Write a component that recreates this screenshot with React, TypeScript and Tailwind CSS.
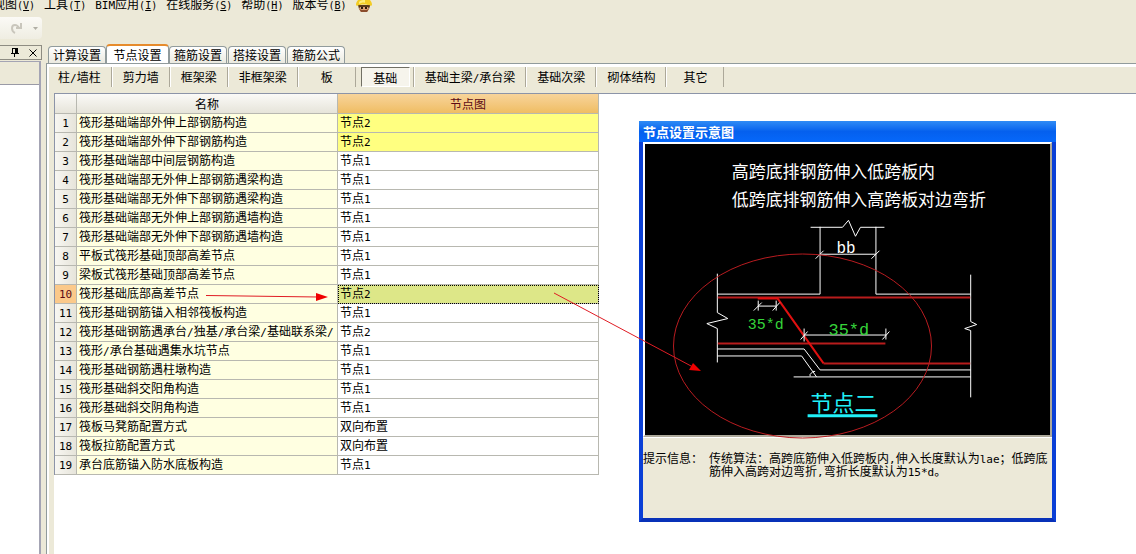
import { Fragment } from "react";

const FONT = "font-['Noto_Sans_CJK_SC','Liberation_Sans',sans-serif]";

const MENUS: [string, string][] = [
  ["视图", "V"],
  ["工具", "T"],
  ["BIM应用", "I"],
  ["在线服务", "S"],
  ["帮助", "H"],
  ["版本号", "B"],
];

const TABS = ["计算设置", "节点设置", "箍筋设置", "搭接设置", "箍筋公式"];
const ACTIVE_TAB = "节点设置";

const CATEGORIES = ["柱/墙柱", "剪力墙", "框架梁", "非框架梁", "板", "基础", "基础主梁/承台梁", "基础次梁", "砌体结构", "其它"];
const ACTIVE_CATEGORY = "基础";

interface Row {
  name: string;
  node: string;
  changed?: boolean;
}

const ROWS: Row[] = [
  { name: "筏形基础端部外伸上部钢筋构造", node: "节点2", changed: true },
  { name: "筏形基础端部外伸下部钢筋构造", node: "节点2", changed: true },
  { name: "筏形基础端部中间层钢筋构造", node: "节点1" },
  { name: "筏形基础端部无外伸上部钢筋遇梁构造", node: "节点1" },
  { name: "筏形基础端部无外伸下部钢筋遇梁构造", node: "节点1" },
  { name: "筏形基础端部无外伸上部钢筋遇墙构造", node: "节点1" },
  { name: "筏形基础端部无外伸下部钢筋遇墙构造", node: "节点1" },
  { name: "平板式筏形基础顶部高差节点", node: "节点1" },
  { name: "梁板式筏形基础顶部高差节点", node: "节点1" },
  { name: "筏形基础底部高差节点", node: "节点2" },
  { name: "筏形基础钢筋锚入相邻筏板构造", node: "节点1" },
  { name: "筏形基础钢筋遇承台/独基/承台梁/基础联系梁/", node: "节点2" },
  { name: "筏形/承台基础遇集水坑节点", node: "节点1" },
  { name: "筏形基础钢筋遇柱墩构造", node: "节点1" },
  { name: "筏形基础斜交阳角构造", node: "节点1" },
  { name: "筏形基础斜交阴角构造", node: "节点1" },
  { name: "筏板马凳筋配置方式", node: "双向布置" },
  { name: "筏板拉筋配置方式", node: "双向布置" },
  { name: "承台底筋锚入防水底板构造", node: "节点1" },
];
const SELECTED = 9;

// Latin runs are set about half as wide as a Chinese character
function Mixed({ text }: { text: string }) {
  return (
    <>
      {text.split(/([\x21-\x7e]+)/).map((part, i) =>
        i % 2 ? (
          <span key={i} className="font-['DejaVu_Sans_Mono',monospace] text-[11px] leading-none">{part}</span>
        ) : (
          <Fragment key={i}>{part}</Fragment>
        )
      )}
    </>
  );
}

function MenuBar() {
  return (
    <nav className="flex h-[17px] shrink-0 items-start gap-[9px] overflow-hidden whitespace-nowrap">
      {MENUS.map(([label, key], i) => (
        <button key={key} type="button" className={`h-2 leading-2 ${i === 0 ? "-ml-[7px]" : ""}`}>
          <Mixed text={label} />
          <span className="font-['DejaVu_Sans_Mono',monospace] text-[10px] leading-none">
            (<u>{key}</u>)
          </span>
        </button>
      ))}
      <button type="button" aria-label="助手">
        <Helmet />
      </button>
    </nav>
  );
}

function Helmet() {
  return (
    <svg width="16" height="13" viewBox="0 0 16 13">
      <path d="M3 5h10v4l-2 3H5L3 9z" fill="#dca274" />
      <path d="M2 5h12v1l-1 3-1-2H4L3 9z" fill="#5a3818" />
      <path d="M3 9l3 1h4l3-1-2 3H5z" fill="#8a4c2c" />
      <path d="M5 7h2v2H5zM9 7h2v2H9z" fill="#2c1a0c" />
      <path d="M0 5C0 1 3-2 8-2s8 3 8 7l-1 1c-3-2-11-2-14 0z" fill="#f3cc24" />
      <path d="M3 2c2-2 4-2 6-2v3C7 2 5 3 3 4z" fill="#fdee7a" />
    </svg>
  );
}

function SidePanel() {
  return (
    <aside className="flex w-[42px] shrink-0 flex-col">
      <div className="flex h-[22px] items-center justify-end gap-[10px] rounded-r bg-linear-to-b from-[#fbfaf6] to-[#efede2] pr-1">
        <button type="button" aria-label="撤销列表" className="mr-auto">
          <svg width="2" height="3" viewBox="3 0 2 3"><path d="M0 0h5L2.500 3z" /></svg>
        </button>
        <button type="button" aria-label="重做">
          <svg width="13" height="12" viewBox="0 0 13 12" fill="none" stroke="#c9c6bc" strokeWidth="2">
            <path d="M5 11C1 9 1 3 5 3c2 0 3 1 4 3" />
            <path d="M11 1v5H6" />
          </svg>
        </button>
        <button type="button" aria-label="重做列表">
          <svg width="5" height="3" viewBox="0 0 5 3"><path d="M0 0h5L2.500 3z" fill="#b0aea4" /></svg>
        </button>
      </div>
      <div className="mt-[6px] flex h-[15px] items-center justify-end gap-[10px] border border-l-0 border-[#8e8c82] pr-1">
        <button type="button" aria-label="固定">
          <svg width="8" height="9" viewBox="0 0 8 9">
            <path d="M1 0h6v5h1v1H4v3H3V6H0V5h1zM2 1v4h2V1z" fillRule="evenodd" />
          </svg>
        </button>
        <button type="button" aria-label="关闭">
          <svg width="8" height="8" viewBox="0 0 8 8" stroke="#000"><path d="M.5.500l7 7M7.500.500l-7 7" /></svg>
        </button>
      </div>
      <div className="mt-px mr-px flex flex-1 flex-col border-t border-r-2 border-[#a4a4b4]">
        <div className="h-[23px] border-b border-[#9a9aa6]" />
        <div className="flex-1 bg-white" />
      </div>
    </aside>
  );
}

function TabStrip() {
  return (
    <div className="flex h-[19px] shrink-0 items-end gap-px pl-[2px]" role="tablist">
      {TABS.map(tab =>
        tab === ACTIVE_TAB ? (
          <button key={tab} type="button" role="tab" aria-selected className="-mx-px h-[19px] w-[63px] rounded-t-sm border-x border-t-2 border-x-[#919b9c] border-t-[#e68b2c] bg-white leading-4">
            {tab}
          </button>
        ) : (
          <button key={tab} type="button" role="tab" aria-selected={false} className="h-[17px] w-[58px] rounded-t-sm border border-b-0 border-[#919b9c] bg-linear-to-b from-white to-[#ebeae0] leading-4">
            {tab}
          </button>
        )
      )}
    </div>
  );
}

function CategoryBar() {
  return (
    <div className="flex h-[26px] shrink-0 items-start bg-[#ece9d8] whitespace-nowrap">
      {CATEGORIES.map(cat => (
        <div key={cat} className="flex h-5 min-w-[58px] border-r border-[#aca899] first:-ml-[2px]">
          {cat === ACTIVE_CATEGORY ? (
            <button type="button" aria-pressed className="mr-[3px] ml-[5px] flex-1 border border-t-[#716f64] border-r-white border-b-white border-l-[#716f64] bg-[#f6f4ec] leading-5">
              {cat}
            </button>
          ) : (
            <button type="button" className="flex-1 border-l border-white px-[10px] leading-[18px]">
              <Mixed text={cat} />
            </button>
          )}
        </div>
      ))}
    </div>
  );
}

function NodeTable() {
  return (
    <table className="w-[545px] table-fixed border-separate border-spacing-0 border-l border-[#8c94a8] text-left whitespace-nowrap">
      <colgroup>
        <col className="w-[22px]" />
        <col />
        <col className="w-[261px]" />
      </colgroup>
      <thead>
        <tr className="h-5 text-center leading-[19px]">
          <th className="border-r border-b border-[#b8b8b0] bg-linear-to-b from-[#fbfaf7] to-[#e6e4da] p-0" />
          <th className="border-r border-b border-[#b8b8b0] bg-linear-to-b from-[#fbfaf7] to-[#e6e4da] p-0 font-normal">名称</th>
          <th className="border-r border-b border-[#b8b8b0] bg-linear-to-b from-[#f8d49a] to-[#efbd62] p-0 font-normal text-[#5c0a14]">节点图</th>
        </tr>
      </thead>
      <tbody className="align-top">
        {ROWS.map((row, i) => {
          const selected = i === SELECTED;
          return (
            <tr key={row.name} className="h-[19px] leading-4">
              <th className={`border-r border-b border-[#b8b8b0] p-0 text-center font-normal ${selected ? "bg-[#fbc98a] text-[#5c0a14]" : "bg-linear-to-r from-[#f8f7f2] to-[#e6e4da]"}`}>
                <Mixed text={String(i + 1)} />
              </th>
              <td className="overflow-hidden border-r border-b border-[#b8b8b0] bg-[#ffffe1] p-0 pl-[2px]">
                <Mixed text={row.name} />
              </td>
              <td className={`border-r border-b border-[#b8b8b0] p-0 pl-[2px] ${selected ? "bg-[#dde788] outline-1 -outline-offset-1 outline-black outline-dotted" : row.changed ? "bg-[#ffff80]" : "bg-white"}`}>
                <Mixed text={row.node} />
              </td>
            </tr>
          );
        })}
      </tbody>
    </table>
  );
}

function NodeDrawing() {
  return (
    <svg viewBox="645 144 406 292" className="block w-full bg-black font-['Noto_Sans_CJK_SC',sans-serif]" fill="none" stroke="#fff">
      <g fill="#fff" stroke="none" fontSize="17">
        <text x="732" y="178">高跨底排钢筋伸入低跨板内</text>
        <text x="732" y="206">低跨底排钢筋伸入高跨板对边弯折</text>
      </g>

      {/* column */}
      <path d="M811 227.500h32l6-7 7 16 5-9h24M820.500 227v67.500M876.500 227v67.500M820.500 254.500h56M816 259l8-8M872 259l8-8" />
      {/* slab outline */}
      <path d="M717.500 294.500h103M876.500 294.500h95M717.500 274v39l10.500 6-21 5 10.500 5v34M971.500 275v47l6 3-12 4 6 2v67" />
      <path d="M717.500 349.500h87l16 21h151M717.500 356.500h84.500l15 21M794 377.500h177.500M810.500 377v-2l3-3h2" />

      {/* rebar */}
      <g stroke="#b81c1c" strokeWidth="2">
        <path d="M718 298h253M718 344h168M824 364h147" />
        <path d="M758 299h20l46 65" stroke="#e01010" />
      </g>

      {/* anchorage lengths */}
      <path d="M758.500 301v10M776.500 301v10M758.500 306.500h18M754 311l8-8M773 311l7-8" />
      <path d="M804.500 329v13M886.500 329v11M804.500 335.500h82M801 340l7-8M883 340l7-8" />
      <g className="font-['Liberation_Mono',monospace]" stroke="none">
        <text x="837" y="253" fill="#fff" fontSize="16">bb</text>
        <text x="748" y="329" fill="#35d43a" fontSize="15">35*d</text>
        <text x="829" y="335" fill="#35d43a" fontSize="17">35*d</text>
      </g>

      <text x="811" y="412" fill="#20f0f8" stroke="none" fontSize="22">节点二</text>
      <path d="M808 416.500h70" stroke="#20f0f8" strokeWidth="3" />
    </svg>
  );
}

function DiagramWindow() {
  return (
    <section className="absolute top-[121px] left-[639px] flex h-[401px] w-[417px] flex-col border-4 border-t-0 border-[#0a3fd6] border-b-[#0831b8] bg-[#ece9d8]">
      <h2 className="-mx-1 h-[21px] shrink-0 bg-linear-to-b from-[#2f8bf5] via-[#0560ee] to-[#0668fa] px-1 text-[13px] leading-[22px] font-bold text-white">
        节点设置示意图
      </h2>
      <div className="border-2 border-t-white border-r-[#aca899] border-b-[#aca899] border-l-white">
        <NodeDrawing />
      </div>
      <div className="flex gap-[6px] border-t border-white pt-[14px] leading-3">
        <p className="w-[60px] shrink-0">提示信息：</p>
        <p className="w-[340px]">
          <Mixed text="传统算法：高跨底筋伸入低跨板内,伸入长度默认为lae；低跨底筋伸入高跨对边弯折,弯折长度默认为15*d。" />
        </p>
      </div>
    </section>
  );
}

function Annotations() {
  return (
    <svg className="pointer-events-none absolute top-0 left-0" width="1056" height="522" fill="none" stroke="#e01c24">
      <path d="M206 295.500L318 297M554 293L692 366.500" />
      <path d="M328 297l-12-4v8zM701 371l-8-8-4 7z" fill="#f00000" stroke="none" />
      <ellipse cx="802.500" cy="346" rx="129" ry="92" stroke="#b81c20" />
    </svg>
  );
}

export default function App() {
  return (
    <div className={`relative flex min-h-screen flex-col overflow-hidden bg-[#ece9d8] text-xs text-black ${FONT}`}>
      <MenuBar />
      <div className="flex flex-1">
        <SidePanel />
        <main className="ml-1 flex min-w-0 flex-1 flex-col pt-[27px]">
          <TabStrip />
          <div className="flex flex-1 flex-col border-t border-l border-[#919b9c]">
            <div className="flex flex-1 flex-col border-t-[3px] border-l-2 border-white">
              <CategoryBar />
              <div className="flex flex-1 bg-[#ece9d8] pl-[5px]">
                <div className="flex-1 border-t border-[#8c94a8] bg-white">
                  <NodeTable />
                </div>
              </div>
            </div>
          </div>
        </main>
      </div>
      <DiagramWindow />
      <Annotations />
    </div>
  );
}
